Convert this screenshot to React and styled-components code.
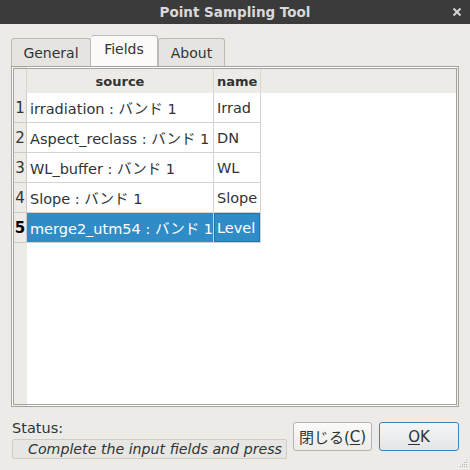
import React from "react";
import styled, { createGlobalStyle } from "styled-components";

const GlobalStyle = createGlobalStyle`
  html, body {
    margin: 0;
    padding: 0;
    background: #edebe8;
  }
`;

const rows = [
  { source: "irradiation : バンド 1", name: "Irrad" },
  { source: "Aspect_reclass : バンド 1", name: "DN" },
  { source: "WL_buffer : バンド 1", name: "WL" },
  { source: "Slope : バンド 1", name: "Slope" },
  { source: "merge2_utm54 : バンド 1", name: "Level" },
];

const Window = styled.div`
  position: relative;
  width: 470px;
  height: 470px;
  background: #edebe8;
  display: flex;
  flex-direction: column;
  font-family: "DejaVu Sans", "Noto Sans CJK JP", sans-serif;
  font-size: 14px;
  color: #2e3436;
  overflow: hidden;
`;

const TitleBar = styled.div`
  height: 24px;
  background: #3b3b3b;
  display: grid;
  grid-template-columns: 1fr auto 1fr;
  align-items: center;
  color: #d9d9d9;
  font-weight: bold;
  font-size: 13.5px;
  h1 {
    grid-column: 2;
    margin: 0;
    font-size: inherit;
    font-weight: inherit;
  }
`;

const CloseButton = styled.div`
  grid-column: 3;
  justify-self: end;
  margin-right: 8px;
  display: flex;
`;

const Body = styled.div`
  padding: 11px 11px 0;
  display: flex;
  flex-direction: column;
`;

const TabBar = styled.div`
  display: flex;
  align-items: flex-end;
  height: 31px;
`;

const Tab = styled.div`
  width: ${(p) => p.w}px;
  height: ${(p) => (p.active ? 31 : 28)}px;
  box-sizing: border-box;
  display: flex;
  align-items: center;
  justify-content: center;
  border: 1px solid #bdb9b4;
  border-bottom: none;
  border-left: ${(p) => (p.active ? "none" : "1px solid #bdb9b4")};
  border-radius: 3px 3px 0 0;
  background: ${(p) => (p.active ? "#fbfaf9" : "#e6e4e1")};
  color: #2e3436;
  font-size: 14px;
  padding-bottom: ${(p) => (p.active ? 4 : 0)}px;
`;

const Frame = styled.div`
  height: 341px;
  box-sizing: border-box;
  border: 3px double #a6a29e;
  background: linear-gradient(to right, #edebe8 13px, #fff 13px);
  display: flex;
  flex-direction: column;
`;

const GridRow = styled.div`
  display: grid;
  grid-template-columns: 13px 187px 47px 1fr;
  height: ${(p) => (p.header ? 24 : 30)}px;
  background: ${(p) => (p.header ? "#edebe8" : "transparent")};
`;

const HeadCell = styled.div`
  display: flex;
  align-items: center;
  justify-content: ${(p) => (p.center ? "center" : "flex-start")};
  padding-left: ${(p) => (p.center ? 0 : 3)}px;
  font-weight: bold;
  font-size: 13px;
  border-right: ${(p) => (p.last ? "none" : "1px solid #dad7d3")};
`;

const RowNum = styled.div`
  display: flex;
  align-items: center;
  justify-content: center;
  font-weight: ${(p) => (p.selected ? "bold" : "normal")};
  color: ${(p) => (p.selected ? "#000" : "#2e3436")};
  border-right: 1px solid #cfcbc7;
  border-bottom: 1px solid #cfcbc7;
  font-size: 15px;
`;

const Cell = styled.div`
  display: flex;
  align-items: center;
  padding-left: 3px;
  white-space: nowrap;
  overflow: hidden;
  box-sizing: border-box;
  font-size: 14.5px;
  background: ${(p) => (p.selected ? "#308cc6" : "#fff")};
  color: ${(p) => (p.selected ? "#fff" : "#2e3436")};
  border-right: 1px solid #d6d3cf;
  border-bottom: 1px solid #d6d3cf;
  ${(p) => p.focus && "box-shadow: inset 0 0 0 1px #2672a6;"}
`;

const Footer = styled.div`
  display: flex;
  align-items: flex-start;
  gap: 6px;
  margin-top: 13px;
  padding-left: 1px;
`;

const StatusColumn = styled.div`
  width: 275px;
  display: flex;
  flex-direction: column;
  gap: 3px;
`;

const StatusLabel = styled.div`
  line-height: 16px;
  font-size: 14.5px;
`;

const StatusBox = styled.div`
  height: 20px;
  box-sizing: border-box;
  border: 1px solid #d0cdc9;
  border-radius: 2px;
  background: #e8e6e3;
  padding-left: 15px;
  display: flex;
  align-items: center;
  white-space: nowrap;
  font-style: italic;
  font-size: 14.2px;
  color: #2e3436;
`;

const Buttons = styled.div`
  display: flex;
  gap: 7px;
  margin-top: 2px;
`;

const Button = styled.div`
  width: ${(p) => (p.primary ? 80 : 79)}px;
  height: 29px;
  box-sizing: border-box;
  display: flex;
  align-items: center;
  justify-content: center;
  border-radius: 3px;
  border: 1px solid ${(p) => (p.primary ? "#3f84b9" : "#b7b3ae")};
  background: ${(p) =>
    p.primary
      ? "linear-gradient(#f4f5f6, #e3e6e9)"
      : "linear-gradient(#fafaf9, #eeece9)"};
  color: #2e3436;
  font-size: 15px;
  u {
    text-underline-offset: 2px;
  }
`;

const Grip = styled.svg`
  position: absolute;
  right: 2px;
  bottom: 2px;
`;

export default function App() {
  return (
    <Window>
      <GlobalStyle />
      <TitleBar>
        <h1>Point Sampling Tool</h1>
        <CloseButton>
          <svg width="10" height="10" viewBox="0 0 10 10">
            <path d="M1.5 1.5 L8.5 8.5 M8.5 1.5 L1.5 8.5" stroke="#d4d4d4" strokeWidth="2" />
          </svg>
        </CloseButton>
      </TitleBar>
      <Body>
        <TabBar>
          <Tab w={80}>General</Tab>
          <Tab active w={67}>Fields</Tab>
          <Tab w={67}>About</Tab>
        </TabBar>
        <Frame>
          <GridRow header>
            <HeadCell />
            <HeadCell center>source</HeadCell>
            <HeadCell>name</HeadCell>
            <HeadCell last />
          </GridRow>
          {rows.map((r, i) => {
            const sel = i === rows.length - 1;
            return (
              <GridRow key={r.name}>
                <RowNum selected={sel}>{i + 1}</RowNum>
                <Cell selected={sel}>{r.source}</Cell>
                <Cell selected={sel} focus={sel}>{r.name}</Cell>
                <div />
              </GridRow>
            );
          })}
        </Frame>
        <Footer>
          <StatusColumn>
            <StatusLabel>Status:</StatusLabel>
            <StatusBox>Complete the input fields and press</StatusBox>
          </StatusColumn>
          <Buttons>
            <Button>
              閉じる(<u>C</u>)
            </Button>
            <Button primary>
              <u>O</u>K
            </Button>
          </Buttons>
        </Footer>
      </Body>
      <Grip width="10" height="10" viewBox="0 0 10 10">
        {[[8, 2], [6, 4], [8, 4], [4, 6], [6, 6], [8, 6], [2, 8], [4, 8], [6, 8], [8, 8]].map(([x, y]) => (
          <rect key={x + "-" + y} x={x} y={y} width="1" height="1" fill="#b8b4b0" />
        ))}
      </Grip>
    </Window>
  );
}
